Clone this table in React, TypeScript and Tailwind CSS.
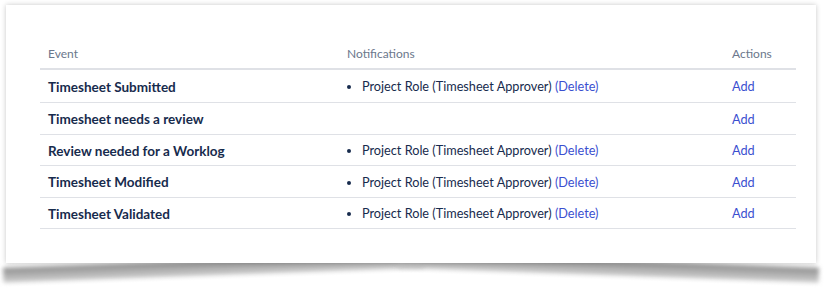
const rows = [
  { event: 'Timesheet Submitted', role: 'Project Role (Timesheet Approver)', h: 'h-[33px]' },
  { event: 'Timesheet needs a review', role: null, h: 'h-[32px]' },
  { event: 'Review needed for a Worklog', role: 'Project Role (Timesheet Approver)', h: 'h-[31px]' },
  { event: 'Timesheet Modified', role: 'Project Role (Timesheet Approver)', h: 'h-[32px]' },
  { event: 'Timesheet Validated', role: 'Project Role (Timesheet Approver)', h: 'h-[31px]' },
]

export default function App() {
  return (
    <div className="w-[830px] h-[293px] bg-white pt-[5px] pl-[6px]" style={{ fontFamily: 'Lato, "Noto Sans", sans-serif' }}>
      <div className="relative w-[810px] h-[258px]">
        {/* curled-page shadow: two halves tilted down toward the outer corners */}
        <div className="absolute left-[-3px] top-[248px] w-[52%] h-[15px] bg-gradient-to-b from-[#8f8f8f] to-[#cfcfcf] blur-[2px] -rotate-[2deg] origin-right" />
        <div className="absolute right-[-3px] top-[248px] w-[52%] h-[15px] bg-gradient-to-b from-[#8f8f8f] to-[#cfcfcf] blur-[2px] rotate-[2deg] origin-left" />

        <div className="relative h-full bg-white shadow-[0_0_5px_rgba(0,0,0,0.22)] pt-[34px] pl-[34px] pr-[20px]">
          <div className="grid grid-cols-[299px_385px_72px] text-[12.7px] text-[#172b4d]">
            <div className="h-[31px] flex items-center px-2 text-[12px] text-[#6b778c] border-b-2 border-[#dfe1e6]">Event</div>
            <div className="h-[31px] flex items-center px-2 text-[12px] text-[#6b778c] border-b-2 border-[#dfe1e6]">Notifications</div>
            <div className="h-[31px] flex items-center px-2 text-[12px] text-[#6b778c] border-b-2 border-[#dfe1e6]">Actions</div>
            {rows.map((r) => (
              <div key={r.event} className="contents">
                <div className={`${r.h} flex items-center px-2 pt-[2px] font-bold text-[13.5px] border-b border-[#dfe1e6]`}>{r.event}</div>
                <div className={`${r.h} flex items-center pt-[2px] border-b border-[#dfe1e6]`}>
                  {r.role && (
                    <ul className="list-disc pl-[23px]">
                      <li>
                        {r.role} <a className="text-[#3b4fd0]">(Delete)</a>
                      </li>
                    </ul>
                  )}
                </div>
                <div className={`${r.h} flex items-center px-2 pt-[2px] border-b border-[#dfe1e6]`}>
                  <a className="text-[#3b4fd0]">Add</a>
                </div>
              </div>
            ))}
          </div>
        </div>
      </div>
    </div>
  )
}
